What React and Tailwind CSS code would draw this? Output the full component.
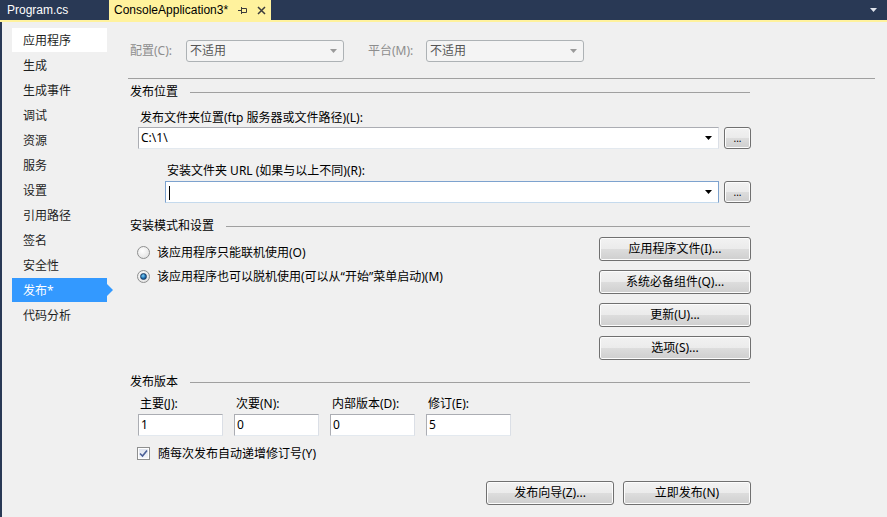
import { useState } from 'react';

const FONT = { fontFamily: '"Noto Sans", "Noto Sans CJK SC", sans-serif' };
const TAB_FONT = { fontFamily: '"Liberation Sans", Arial, sans-serif' };

const navItems = ['应用程序', '生成', '生成事件', '调试', '资源', '服务', '设置', '引用路径', '签名', '安全性', '发布*', '代码分析'];

// height and font size are passed in by the caller so classes don't collide
function WinButton({ children, className = '' }) {
  return (
    <button
      className={`rounded-[3px] border border-[#707070] text-black leading-none bg-[linear-gradient(#f2f2f2_0%,#ebebeb_50%,#dddddd_50%,#cfcfcf_100%)] shadow-[inset_0_0_0_1px_#fcfcfc] ${className}`}
    >
      {children}
    </button>
  );
}

function DownArrow({ color = '#000' }) {
  return (
    <svg width="7" height="4" viewBox="0 0 7 4">
      <path d="M0 0H7L3.5 4Z" fill={color} />
    </svg>
  );
}

function GroupHeader({ title, className = '' }) {
  return (
    <div className={`flex items-center h-[14px] w-[622px] ${className}`}>
      <span className="pl-[2px] text-[12px] text-black whitespace-nowrap">{title}</span>
      <div className="flex-1 h-px bg-[#a0a0a0] ml-[12px]" />
    </div>
  );
}

function Combo({ value, focused, className = '' }) {
  return (
    <div
      className={`h-[22px] flex items-center bg-white border ${
        focused ? 'border-[#7da2ce] border-b-[#c5daed]' : 'border-[#abadb3] border-b-[#e3e9ef] border-r-[#dbdfe6]'
      } ${className}`}
    >
      <span className="flex-1 pl-[2px] text-[12px] text-black">
        {focused ? <span className="inline-block w-px h-[14px] bg-black align-middle ml-[1px]" /> : value}
      </span>
      <span className="pr-[6px] flex items-center">
        <DownArrow />
      </span>
    </div>
  );
}

function Radio({ checked }) {
  return (
    <span className="w-[13px] h-[13px] rounded-full border border-[#8e8f8f] bg-[radial-gradient(circle_at_40%_35%,#ffffff,#dcdcdc)] flex items-center justify-center shrink-0">
      {checked && (
        <span className="w-[7px] h-[7px] rounded-full bg-[radial-gradient(circle_at_40%_35%,#7fd0f7,#1767a8_60%,#0d3c6e)] border border-[#1b3d66]" />
      )}
    </span>
  );
}

export default function App() {
  const [selected] = useState(10);

  return (
    <div className="w-[887px] h-[517px] overflow-hidden bg-[#f0f0f0] flex flex-col select-none" style={FONT}>
      {/* Tab strip */}
      <div className="h-[20px] bg-[#293955] flex items-stretch shrink-0" style={TAB_FONT}>
        <div className="w-[108px] flex items-center pl-[7px] text-[12px] text-white">Program.cs</div>
        <div className="w-[162px] ml-[1px] bg-[#fff29d] flex items-center pl-[5px] text-[12px] text-black">
          <span className="w-[124px] whitespace-nowrap">ConsoleApplication3*</span>
          <svg width="10" height="9" viewBox="0 0 10 9">
            <path d="M0 4.5H3M3.5 1V8M3.5 2.5H8.5V6.5H3.5" stroke="#3c3c3c" strokeWidth="1" fill="none" />
          </svg>
          <svg width="9" height="9" viewBox="0 0 9 9" className="ml-[9px]">
            <path d="M1 1L8 8M8 1L1 8" stroke="#3c3c3c" strokeWidth="1.5" fill="none" />
          </svg>
        </div>
        <div className="flex-1" />
        <div className="pr-[10px] flex items-center">
          <DownArrow color="#dfe4ec" />
        </div>
      </div>
      <div className="h-[2px] bg-[#fff29d] shrink-0" />

      <div className="flex flex-1 border-l-[2px] border-[#293955]">
        {/* Sidebar */}
        <div className="w-[111px] shrink-0 pt-[6px] pl-[10px]">
          {navItems.map((item, i) => {
            const isSel = i === selected;
            const isHover = i === 0;
            return (
              <div key={item} className="relative h-[25px]">
                <div
                  className={`h-[24px] w-[95px] flex items-center pl-[11px] pt-[1px] text-[12px] ${
                    isSel ? 'bg-[#3399ff] text-white' : isHover ? 'bg-white text-[#1e1e1e]' : 'text-[#1e1e1e]'
                  }`}
                >
                  {item}
                </div>
                {isSel && (
                  <div className="absolute left-[95px] top-[6px] w-0 h-0 border-y-[6px] border-y-transparent border-l-[6px] border-l-[#3399ff]" />
                )}
              </div>
            );
          })}
        </div>

        {/* Main content */}
        <div className="pl-[15px] pt-[18px] flex flex-col">
          <div className="flex items-center h-[22px]">
            <span className="pl-[2px] w-[58px] text-[12px] text-[#8d8d8d]">配置(C):</span>
            <div className="w-[158px] h-[22px] rounded-[3px] border border-[#adb2b5] bg-[#f4f4f4] flex items-center">
              <span className="flex-1 pl-[3px] text-[12px] text-[#555]">不适用</span>
              <span className="pr-[6px] flex"><DownArrow color="#9a9a9a" /></span>
            </div>
            <span className="ml-[24px] w-[58px] text-[12px] text-[#8d8d8d]">平台(M):</span>
            <div className="w-[158px] h-[22px] rounded-[3px] border border-[#adb2b5] bg-[#f4f4f4] flex items-center">
              <span className="flex-1 pl-[3px] text-[12px] text-[#555]">不适用</span>
              <span className="pr-[6px] flex"><DownArrow color="#9a9a9a" /></span>
            </div>
          </div>

          <div className="mt-[16px] h-px w-[747px] bg-[#a0a0a0]" />

          <GroupHeader title="发布位置" className="mt-[6px]" />

          <div className="mt-[12px] pl-[12px] h-[14px] flex items-center text-[12px] text-black">
            发布文件夹位置(ftp 服务器或文件路径)(L):
          </div>
          <div className="mt-[2px] flex items-center pl-[10px]">
            <Combo value="C:\1\" className="w-[581px]" />
            <WinButton className="ml-[5px] w-[27px] h-[22px] text-[10px]">...</WinButton>
          </div>

          <div className="mt-[15px] pl-[39px] h-[14px] flex items-center text-[12px] text-black">
            安装文件夹 URL (如果与以上不同)(R):
          </div>
          <div className="mt-[3px] flex items-center pl-[37px]">
            <Combo focused className="w-[554px]" />
            <WinButton className="ml-[5px] w-[27px] h-[22px] text-[10px]">...</WinButton>
          </div>

          <GroupHeader title="安装模式和设置" className="mt-[16px]" />

          <div className="flex w-[623px]">
            <div className="flex-1 pl-[9px] pt-[13px] flex flex-col gap-[11px]">
              <label className="flex items-center h-[13px] text-[12px] text-black">
                <Radio />
                <span className="ml-[7px]">该应用程序只能联机使用(O)</span>
              </label>
              <label className="flex items-center h-[13px] text-[12px] text-black">
                <Radio checked />
                <span className="ml-[7px]">该应用程序也可以脱机使用(可以从“开始”菜单启动)(M)</span>
              </label>
            </div>
            <div className="pt-[4px] flex flex-col gap-[9px]">
              <WinButton className="w-[152px] h-[24px] text-[12px]">应用程序文件(I)...</WinButton>
              <WinButton className="w-[152px] h-[24px] text-[12px]">系统必备组件(Q)...</WinButton>
              <WinButton className="w-[152px] h-[24px] text-[12px]">更新(U)...</WinButton>
              <WinButton className="w-[152px] h-[24px] text-[12px]">选项(S)...</WinButton>
            </div>
          </div>

          <GroupHeader title="发布版本" className="mt-[15px]" />

          <div className="mt-[8px] pl-[10px] flex gap-[11px]">
            {[
              ['主要(J):', '1'],
              ['次要(N):', '0'],
              ['内部版本(D):', '0'],
              ['修订(E):', '5'],
            ].map(([label, val]) => (
              <div key={label} className="flex flex-col">
                <span className="pl-[2px] h-[14px] flex items-center text-[12px] text-black">{label}</span>
                <div className="mt-[3px] w-[85px] h-[22px] bg-white border border-[#abadb3] border-b-[#e3e9ef] border-r-[#dbdfe6] flex items-center pl-[2px] text-[12px] text-black">
                  {val}
                </div>
              </div>
            ))}
          </div>

          <label className="mt-[11px] pl-[9px] flex items-center h-[13px] text-[12px] text-black">
            <span className="w-[13px] h-[13px] border border-[#8e8f8f] bg-white flex items-center justify-center shrink-0">
              <span className="w-[9px] h-[9px] bg-[linear-gradient(#dfe4ef,#f4f6fa)] flex items-center justify-center">
                <svg width="9" height="9" viewBox="0 0 9 9">
                  <path d="M1 4.5L3.5 7L8 1.5" stroke="#4a5f97" strokeWidth="1.6" fill="none" />
                </svg>
              </span>
            </span>
            <span className="ml-[8px]">随每次发布自动递增修订号(Y)</span>
          </label>

          <div className="mt-[21px] w-[623px] flex justify-end gap-[9px]">
            <WinButton className="w-[128px] h-[24px] text-[12px]">发布向导(Z)...</WinButton>
            <WinButton className="w-[128px] h-[24px] text-[12px]">立即发布(N)</WinButton>
          </div>
        </div>
      </div>
    </div>
  );
}
